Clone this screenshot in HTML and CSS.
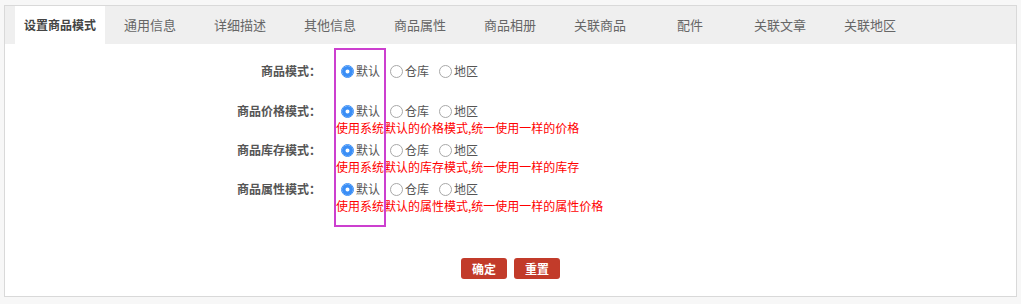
FILE: index.html
```html
<!DOCTYPE html>
<html lang="zh-CN">
<head>
  <meta charset="UTF-8">
  <title>设置商品模式</title>
  <link rel="stylesheet" href="styles.css">
</head>
<body>

  <div class="panel">
    <!-- tabs -->
    <ul class="tabs">
      <li class="active">设置商品模式</li>
      <li>通用信息</li>
      <li>详细描述</li>
      <li>其他信息</li>
      <li>商品属性</li>
      <li>商品相册</li>
      <li>关联商品</li>
      <li>配件</li>
      <li>关联文章</li>
      <li>关联地区</li>
    </ul>

    <form class="mode-form">
      <div class="mark"></div>

      <div class="form-row first">
        <div class="label">商品模式：</div>
        <div class="value">
          <div class="options">
            <label><input type="radio" name="goods_mode" checked>默认</label>
            <label><input type="radio" name="goods_mode">仓库</label>
            <label><input type="radio" name="goods_mode">地区</label>
          </div>
        </div>
      </div>

      <div class="form-row">
        <div class="label">商品价格模式：</div>
        <div class="value">
          <div class="options">
            <label><input type="radio" name="price_mode" checked>默认</label>
            <label><input type="radio" name="price_mode">仓库</label>
            <label><input type="radio" name="price_mode">地区</label>
          </div>
          <div class="notice">使用系统默认的价格模式,统一使用一样的价格</div>
        </div>
      </div>

      <div class="form-row">
        <div class="label">商品库存模式：</div>
        <div class="value">
          <div class="options">
            <label><input type="radio" name="stock_mode" checked>默认</label>
            <label><input type="radio" name="stock_mode">仓库</label>
            <label><input type="radio" name="stock_mode">地区</label>
          </div>
          <div class="notice">使用系统默认的库存模式,统一使用一样的库存</div>
        </div>
      </div>

      <div class="form-row">
        <div class="label">商品属性模式：</div>
        <div class="value">
          <div class="options">
            <label><input type="radio" name="attr_mode" checked>默认</label>
            <label><input type="radio" name="attr_mode">仓库</label>
            <label><input type="radio" name="attr_mode">地区</label>
          </div>
          <div class="notice">使用系统默认的属性模式,统一使用一样的属性价格</div>
        </div>
      </div>

      <div class="buttons">
        <button type="button" class="btn">确定</button>
        <button type="reset" class="btn">重置</button>
      </div>
    </form>
  </div>

</body>
</html>
```

FILE: styles.css
```css
* {
  margin: 0;
  padding: 0;
  box-sizing: border-box;
}

body {
  font-family: "Noto Sans CJK SC", "Liberation Sans", sans-serif;
  font-size: 12px;
  color: #555;
  background: #f7f7f7;
  padding: 5px 0 0 4px;
  height: 304px;
  overflow: hidden;
}

.panel {
  width: 1013px;
  height: 292px;
  background: #fff;
  border: 1px solid #d9d9d9;
}

.tabs {
  list-style: none;
  display: flex;
  height: 38px;
  padding-left: 10px;
  background: #efefef;
}

.tabs li {
  width: 90px;
  line-height: 38px;
  text-align: center;
  font-size: 13px;
  color: #666;
}

.tabs li.active {
  background: #fff;
  font-size: 12px;
  font-weight: bold;
  color: #444;
}

.mode-form {
  position: relative;
  padding-top: 15px;
}

/* annotation box over the default column */
.mark {
  position: absolute;
  left: 329px;
  top: 4px;
  width: 52px;
  height: 179px;
  border: 2px solid #cc3fcf;
}

.form-row {
  display: flex;
  padding: 3px 0;
}

.form-row.first {
  padding-bottom: 19px;
}

.form-row .label {
  width: 316px;
  text-align: right;
  font-weight: bold;
  line-height: 18px;
}

.form-row .value {
  padding-left: 15px;
}

.options {
  display: flex;
  line-height: 18px;
}

.options label {
  display: flex;
  align-items: center;
  margin-right: 5px;
}

.options input {
  appearance: none;
  -webkit-appearance: none;
  width: 13px;
  height: 13px;
  margin: 0 2px 0 5px;
  border: 1px solid #a8a8a8;
  border-radius: 50%;
  background: #fff;
}

.options input:checked {
  border-color: #3a8ef6;
  box-shadow: inset 0 0 0 3.5px #3a8ef6;
}

.notice {
  color: #f00;
  line-height: 15px;
}

.buttons {
  display: flex;
  justify-content: center;
  gap: 7px;
  padding-top: 42px;
}

.btn {
  width: 46px;
  height: 21px;
  border: none;
  border-radius: 3px;
  background: #c23b2a;
  color: #fff;
  font-family: inherit;
  font-size: 12px;
  font-weight: bold;
}
```
